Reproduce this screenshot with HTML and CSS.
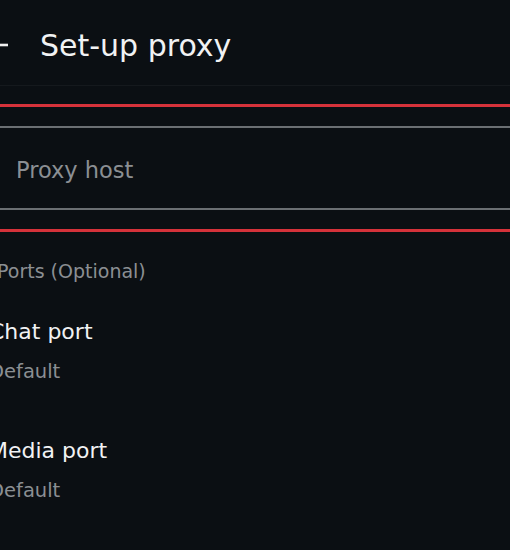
FILE: index.html
```html
<!DOCTYPE html>
<html>
<head>
<meta charset="utf-8">
<link rel="stylesheet" href="styles.css">
</head>
<body>
<div class="screen">
  <header class="appbar">
    <svg class="back" width="24" height="24" viewBox="0 0 24 24"><line x1="0" y1="12" x2="18" y2="12" stroke="#f0f0f0" stroke-width="2.6"/></svg>
    <h1 class="title">Set-up proxy</h1>
  </header>
  <div class="field-wrap">
    <div class="field"><span class="placeholder">Proxy host</span></div>
  </div>
  <div class="section-label">Ports (Optional)</div>
  <div class="item">
    <div class="item-title">Chat port</div>
    <div class="item-sub">Default</div>
  </div>
  <div class="item">
    <div class="item-title">Media port</div>
    <div class="item-sub">Default</div>
  </div>
</div>
</body>
</html>
```

FILE: styles.css
```css
html, body {
  margin: 0;
  padding: 0;
  background: #0b0f13;
}
body {
  font-family: "DejaVu Sans", "Noto Sans", sans-serif;
  width: 510px;
  height: 550px;
  overflow: hidden;
}
.screen {
  display: flex;
  flex-direction: column;
}
.appbar {
  height: 85px;
  display: flex;
  align-items: center;
  border-bottom: 1px solid #15191d;
}
.back {
  margin-left: -10px;
  margin-top: 4px;
  flex: none;
}
.title {
  margin: 0 0 0 26px;
  padding-top: 5px;
  font-size: 30px;
  font-weight: 400;
  color: #f1f2f3;
  line-height: 29px;
}
.field-wrap {
  margin-top: 18px;
  border-top: 3px solid #d5323a;
  border-bottom: 3px solid #d5323a;
  padding: 19px 0 19px;
}
.field {
  margin: 0 -10px;
  height: 80px;
  border: 2px solid #6b6f73;
  border-radius: 8px;
  display: flex;
  align-items: center;
  padding-left: 24px;
}
.placeholder {
  padding-top: 3px;
  font-size: 22.5px;
  color: #8b8f93;
}
.section-label {
  margin-top: 27px;
  margin-left: -3px;
  font-size: 19px;
  color: #8b8f93;
  line-height: 24px;
}
.item {
  margin-left: -11px;
  padding-top: 34px;
  padding-bottom: 17px;
}
.item-title {
  font-size: 22px;
  color: #f1f2f3;
  line-height: 30px;
}
.item-sub {
  margin-top: 12px;
  font-size: 19.5px;
  color: #8b8f93;
  line-height: 26px;
}
```
